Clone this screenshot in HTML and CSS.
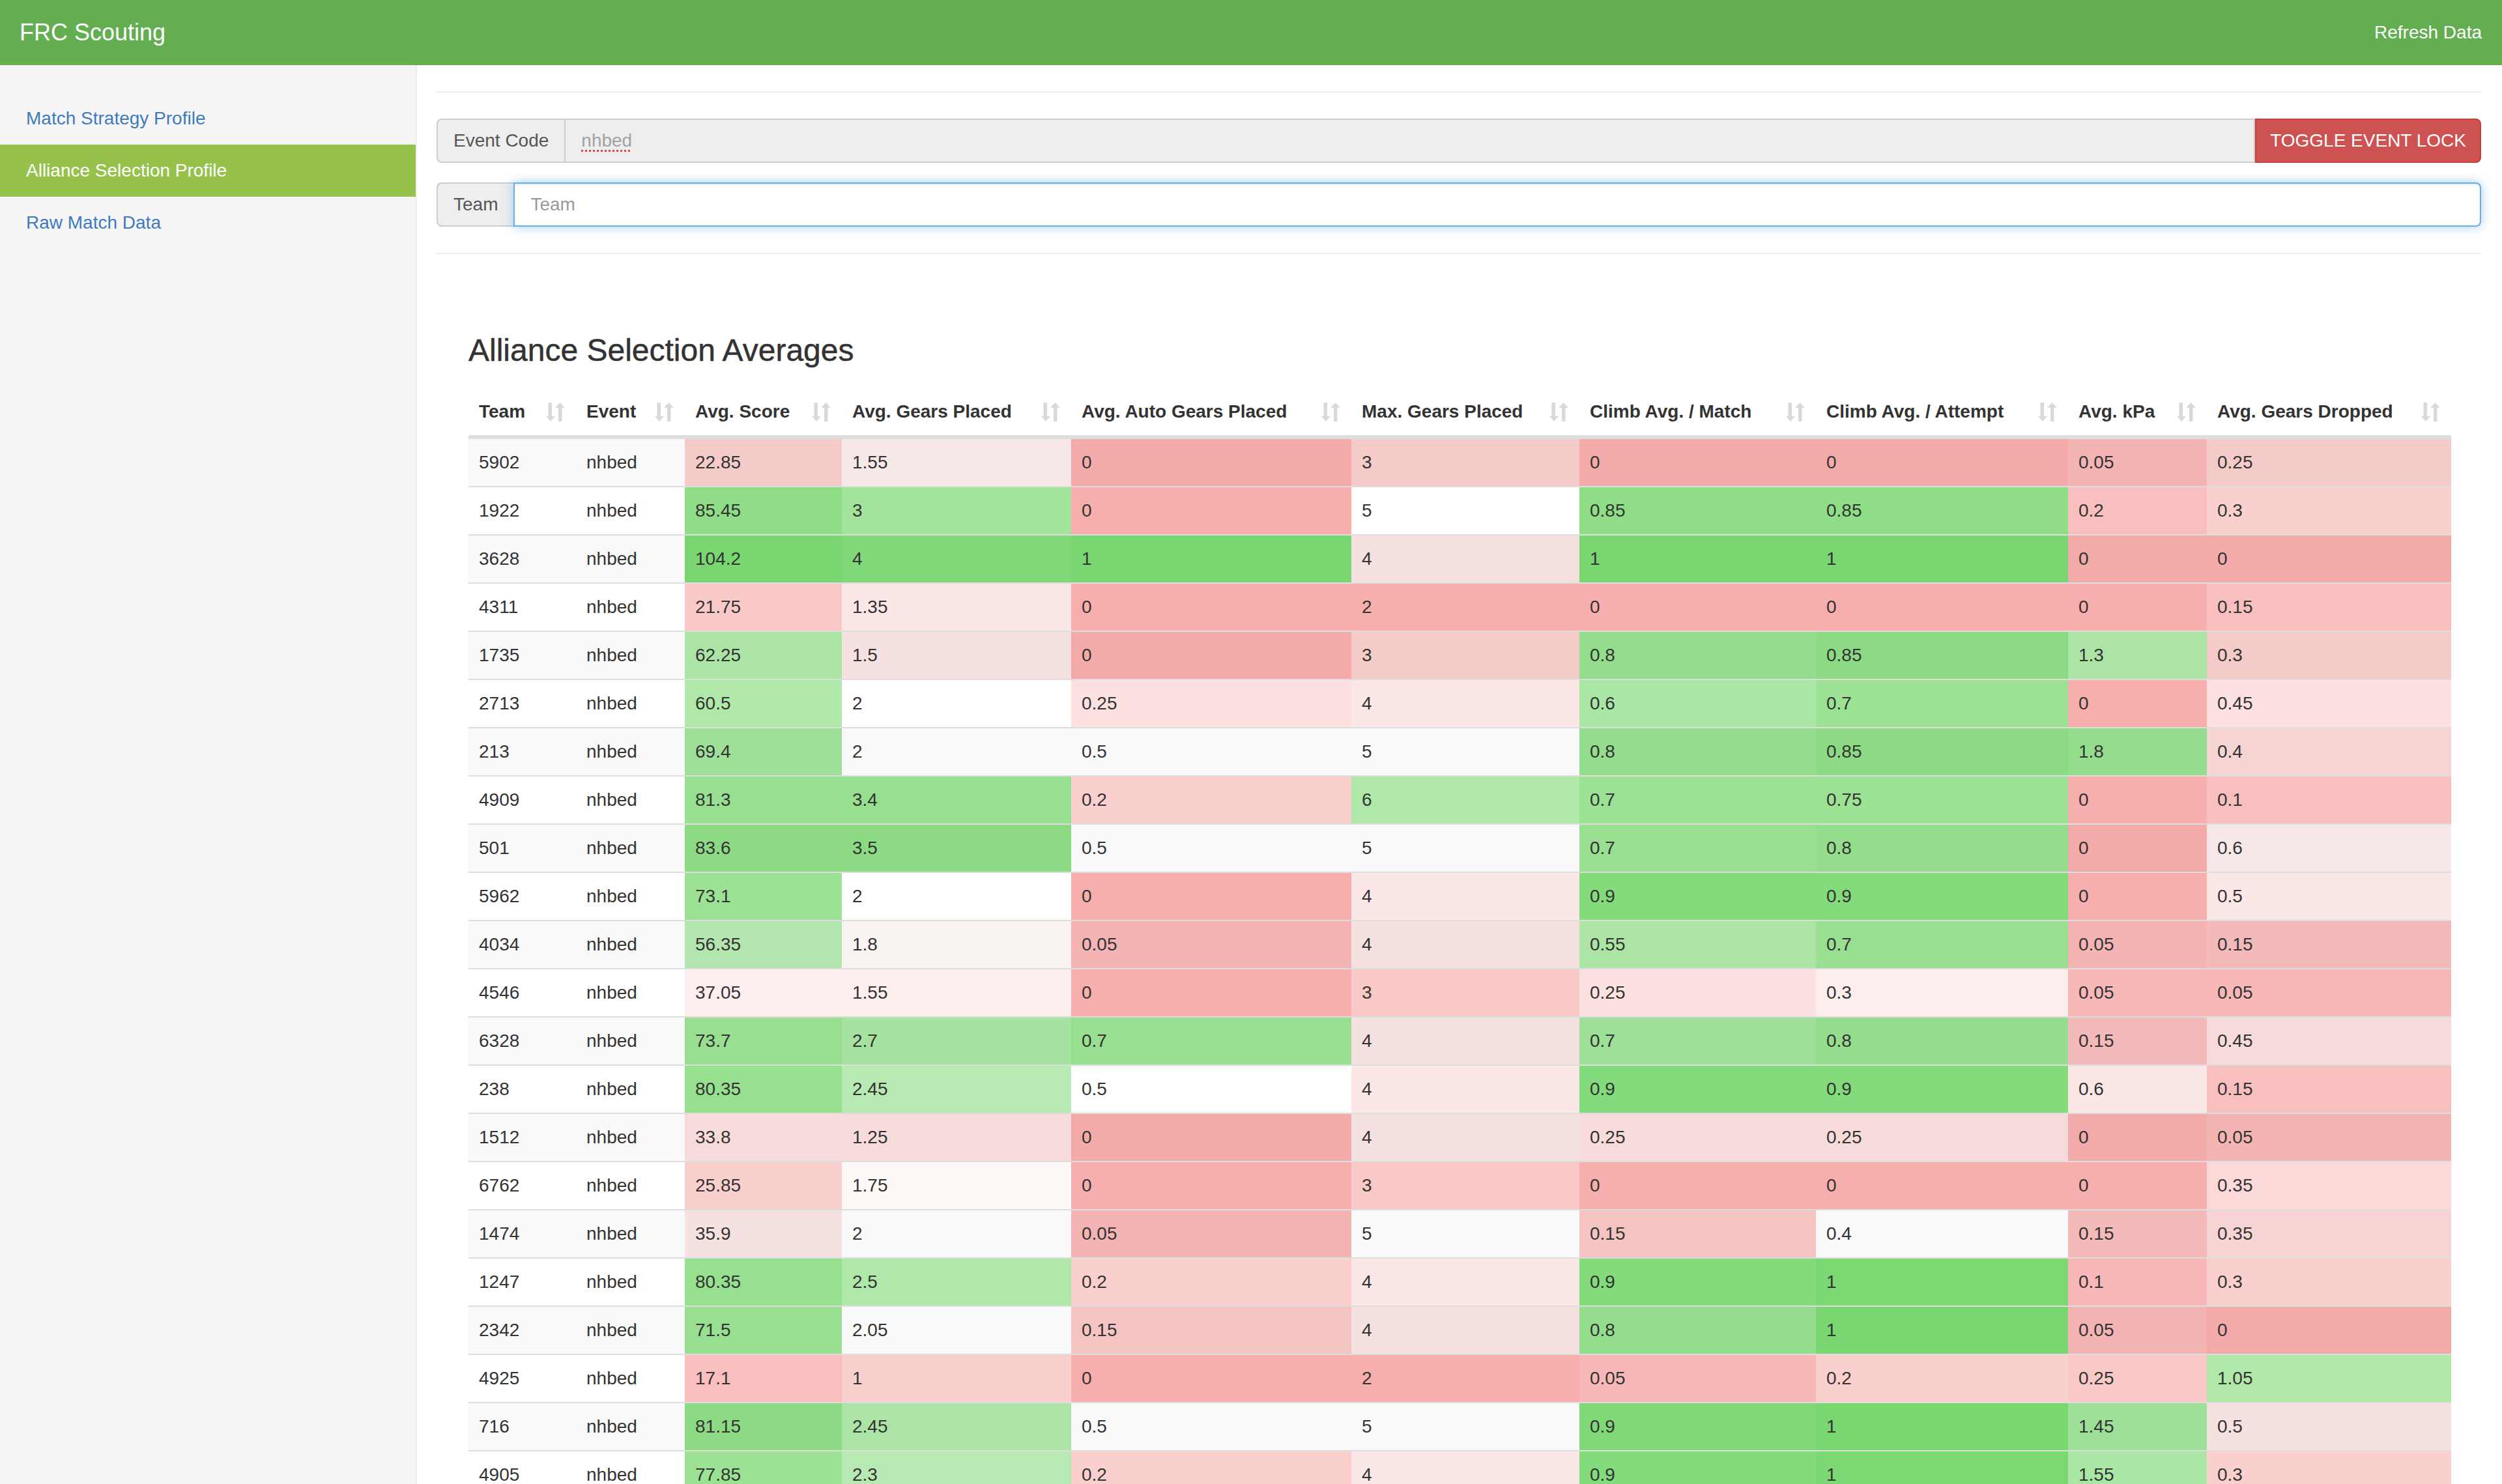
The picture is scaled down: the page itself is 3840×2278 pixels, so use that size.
FILE: index.html
```html
<!DOCTYPE html>
<html lang="en">
<head>
<meta charset="utf-8">
<title>FRC Scouting</title>
<link rel="stylesheet" href="styles.css">
</head>
<body>
<header class="navbar">
  <a class="brand" href="#">FRC Scouting</a>
  <a class="navlink" href="#">Refresh Data</a>
</header>
<div class="layout">
  <nav class="sidebar">
    <ul>
      <li><a href="#">Match Strategy Profile</a></li>
      <li class="active"><a href="#">Alliance Selection Profile</a></li>
      <li><a href="#">Raw Match Data</a></li>
    </ul>
  </nav>
  <main class="main">
    <hr class="rule">
    <div class="filters">
      <div class="input-group">
        <span class="addon">Event Code</span>
        <div class="field locked"><span class="spell">nhbed</span></div>
        <button class="toggle" type="button">TOGGLE EVENT LOCK</button>
      </div>
      <div class="input-group">
        <span class="addon">Team</span>
        <input class="field focused" type="text" placeholder="Team">
      </div>
    </div>
    <hr class="rule">
    <section class="averages">
      <h3 class="title">Alliance Selection Averages</h3>
      <table class="stats">
        <colgroup>
          <col class="c-team"><col class="c-event"><col class="c-score"><col class="c-gears"><col class="c-auto"><col class="c-max"><col class="c-cm"><col class="c-ca"><col class="c-kpa"><col class="c-drop">
        </colgroup>
        <thead>
          <tr>
            <th><div class="th-inner"><span>Team</span><svg class="sort-icon" viewBox="0 0 29 29"><path d="M3.5 0H9v21h5L7 29 0 21h3.5z"/><path d="M21.5 0L29 8h-4.5v21H19V8h-5z"/></svg></div></th>
            <th><div class="th-inner"><span>Event</span><svg class="sort-icon" viewBox="0 0 29 29"><path d="M3.5 0H9v21h5L7 29 0 21h3.5z"/><path d="M21.5 0L29 8h-4.5v21H19V8h-5z"/></svg></div></th>
            <th><div class="th-inner"><span>Avg. Score</span><svg class="sort-icon" viewBox="0 0 29 29"><path d="M3.5 0H9v21h5L7 29 0 21h3.5z"/><path d="M21.5 0L29 8h-4.5v21H19V8h-5z"/></svg></div></th>
            <th><div class="th-inner"><span>Avg. Gears Placed</span><svg class="sort-icon" viewBox="0 0 29 29"><path d="M3.5 0H9v21h5L7 29 0 21h3.5z"/><path d="M21.5 0L29 8h-4.5v21H19V8h-5z"/></svg></div></th>
            <th><div class="th-inner"><span>Avg. Auto Gears Placed</span><svg class="sort-icon" viewBox="0 0 29 29"><path d="M3.5 0H9v21h5L7 29 0 21h3.5z"/><path d="M21.5 0L29 8h-4.5v21H19V8h-5z"/></svg></div></th>
            <th><div class="th-inner"><span>Max. Gears Placed</span><svg class="sort-icon" viewBox="0 0 29 29"><path d="M3.5 0H9v21h5L7 29 0 21h3.5z"/><path d="M21.5 0L29 8h-4.5v21H19V8h-5z"/></svg></div></th>
            <th><div class="th-inner"><span>Climb Avg. / Match</span><svg class="sort-icon" viewBox="0 0 29 29"><path d="M3.5 0H9v21h5L7 29 0 21h3.5z"/><path d="M21.5 0L29 8h-4.5v21H19V8h-5z"/></svg></div></th>
            <th><div class="th-inner"><span>Climb Avg. / Attempt</span><svg class="sort-icon" viewBox="0 0 29 29"><path d="M3.5 0H9v21h5L7 29 0 21h3.5z"/><path d="M21.5 0L29 8h-4.5v21H19V8h-5z"/></svg></div></th>
            <th><div class="th-inner"><span>Avg. kPa</span><svg class="sort-icon" viewBox="0 0 29 29"><path d="M3.5 0H9v21h5L7 29 0 21h3.5z"/><path d="M21.5 0L29 8h-4.5v21H19V8h-5z"/></svg></div></th>
            <th><div class="th-inner"><span>Avg. Gears Dropped</span><svg class="sort-icon" viewBox="0 0 29 29"><path d="M3.5 0H9v21h5L7 29 0 21h3.5z"/><path d="M21.5 0L29 8h-4.5v21H19V8h-5z"/></svg></div></th>
          </tr>
        </thead>
        <tbody>
          <tr><td>5902</td><td>nhbed</td><td class="r6">22.85</td><td class="r2">1.55</td><td class="r10">0</td><td class="r6">3</td><td class="r10">0</td><td class="r10">0</td><td class="r9">0.05</td><td class="r6">0.25</td></tr>
          <tr><td>1922</td><td>nhbed</td><td class="g8">85.45</td><td class="g5">3</td><td class="r10">0</td><td>5</td><td class="g8">0.85</td><td class="g8">0.85</td><td class="r8">0.2</td><td class="r6">0.3</td></tr>
          <tr><td>3628</td><td>nhbed</td><td class="g10">104.2</td><td class="g9">4</td><td class="g10">1</td><td class="r3">4</td><td class="g10">1</td><td class="g10">1</td><td class="r10">0</td><td class="r10">0</td></tr>
          <tr><td>4311</td><td>nhbed</td><td class="r7">21.75</td><td class="r3">1.35</td><td class="r10">0</td><td class="r10">2</td><td class="r10">0</td><td class="r10">0</td><td class="r10">0</td><td class="r8">0.15</td></tr>
          <tr><td>1735</td><td>nhbed</td><td class="g3">62.25</td><td class="r3">1.5</td><td class="r10">0</td><td class="r6">3</td><td class="g7">0.8</td><td class="g8">0.85</td><td class="g3">1.3</td><td class="r6">0.3</td></tr>
          <tr><td>2713</td><td>nhbed</td><td class="g3">60.5</td><td>2</td><td class="r4">0.25</td><td class="r3">4</td><td class="g4">0.6</td><td class="g6">0.7</td><td class="r10">0</td><td class="r4">0.45</td></tr>
          <tr><td>213</td><td>nhbed</td><td class="g5">69.4</td><td>2</td><td>0.5</td><td>5</td><td class="g7">0.8</td><td class="g8">0.85</td><td class="g7">1.8</td><td class="r5">0.4</td></tr>
          <tr><td>4909</td><td>nhbed</td><td class="g7">81.3</td><td class="g7">3.4</td><td class="r6">0.2</td><td class="g3">6</td><td class="g6">0.7</td><td class="g6">0.75</td><td class="r10">0</td><td class="r8">0.1</td></tr>
          <tr><td>501</td><td>nhbed</td><td class="g8">83.6</td><td class="g8">3.5</td><td>0.5</td><td>5</td><td class="g6">0.7</td><td class="g7">0.8</td><td class="r10">0</td><td class="r2">0.6</td></tr>
          <tr><td>5962</td><td>nhbed</td><td class="g6">73.1</td><td>2</td><td class="r10">0</td><td class="r3">4</td><td class="g9">0.9</td><td class="g9">0.9</td><td class="r10">0</td><td class="r3">0.5</td></tr>
          <tr><td>4034</td><td>nhbed</td><td class="g2">56.35</td><td class="r1">1.8</td><td class="r9">0.05</td><td class="r3">4</td><td class="g3">0.55</td><td class="g6">0.7</td><td class="r9">0.05</td><td class="r8">0.15</td></tr>
          <tr><td>4546</td><td>nhbed</td><td class="r2">37.05</td><td class="r2">1.55</td><td class="r10">0</td><td class="r7">3</td><td class="r4">0.25</td><td class="r2">0.3</td><td class="r9">0.05</td><td class="r9">0.05</td></tr>
          <tr><td>6328</td><td>nhbed</td><td class="g6">73.7</td><td class="g4">2.7</td><td class="g6">0.7</td><td class="r3">4</td><td class="g5">0.7</td><td class="g7">0.8</td><td class="r8">0.15</td><td class="r4">0.45</td></tr>
          <tr><td>238</td><td>nhbed</td><td class="g7">80.35</td><td class="g2">2.45</td><td>0.5</td><td class="r3">4</td><td class="g9">0.9</td><td class="g9">0.9</td><td class="r3">0.6</td><td class="r8">0.15</td></tr>
          <tr><td>1512</td><td>nhbed</td><td class="r4">33.8</td><td class="r4">1.25</td><td class="r10">0</td><td class="r3">4</td><td class="r4">0.25</td><td class="r4">0.25</td><td class="r10">0</td><td class="r9">0.05</td></tr>
          <tr><td>6762</td><td>nhbed</td><td class="r6">25.85</td><td class="r1">1.75</td><td class="r10">0</td><td class="r7">3</td><td class="r10">0</td><td class="r10">0</td><td class="r10">0</td><td class="r5">0.35</td></tr>
          <tr><td>1474</td><td>nhbed</td><td class="r3">35.9</td><td>2</td><td class="r9">0.05</td><td>5</td><td class="r7">0.15</td><td>0.4</td><td class="r8">0.15</td><td class="r5">0.35</td></tr>
          <tr><td>1247</td><td>nhbed</td><td class="g7">80.35</td><td class="g3">2.5</td><td class="r6">0.2</td><td class="r3">4</td><td class="g9">0.9</td><td class="g10">1</td><td class="r9">0.1</td><td class="r6">0.3</td></tr>
          <tr><td>2342</td><td>nhbed</td><td class="g6">71.5</td><td>2.05</td><td class="r7">0.15</td><td class="r3">4</td><td class="g7">0.8</td><td class="g10">1</td><td class="r9">0.05</td><td class="r10">0</td></tr>
          <tr><td>4925</td><td>nhbed</td><td class="r8">17.1</td><td class="r6">1</td><td class="r10">0</td><td class="r10">2</td><td class="r9">0.05</td><td class="r6">0.2</td><td class="r7">0.25</td><td class="g3">1.05</td></tr>
          <tr><td>716</td><td>nhbed</td><td class="g8">81.15</td><td class="g3">2.45</td><td>0.5</td><td>5</td><td class="g9">0.9</td><td class="g10">1</td><td class="g5">1.45</td><td class="r3">0.5</td></tr>
          <tr><td>4905</td><td>nhbed</td><td class="g6">77.85</td><td class="g2">2.3</td><td class="r6">0.2</td><td class="r3">4</td><td class="g9">0.9</td><td class="g10">1</td><td class="g4">1.55</td><td class="r6">0.3</td></tr>
        </tbody>
      </table>
    </section>
  </main>
</div>
</body>
</html>
```
FILE: styles.css
```css
* { box-sizing: border-box; }
html, body { margin: 0; height: 100%; }
body {
  font-family: "Liberation Sans", Arial, Helvetica, sans-serif;
  font-size: 28px;
  line-height: 40px;
  color: #333;
  background: #fff;
  overflow: hidden;
}

/* top bar */
.navbar {
  height: 100px;
  background: #62ae51;
  display: flex;
  align-items: center;
  justify-content: space-between;
  padding: 0 31px 0 30px;
}
.brand { color: #fff; font-size: 36px; line-height: 40px; text-decoration: none; }
.navlink { color: #fff; font-size: 28px; line-height: 40px; text-decoration: none; }

/* page body */
.layout { display: flex; height: calc(100vh - 100px); }
.sidebar {
  width: 640px;
  flex: none;
  background: #f5f5f5;
  border-right: 2px solid #eee;
  padding-top: 42px;
}
.sidebar ul { list-style: none; margin: 0; padding: 0; }
.sidebar a { display: block; padding: 20px 40px; color: #3f7bbc; text-decoration: none; }
.sidebar .active a { background: #96c24b; color: #fff; }

.main { flex: 1; min-width: 0; padding: 40px 32px 0 30px; overflow: hidden; }
.rule { height: 0; margin: 0; border: 0; border-top: 2px solid #eee; }

/* filter inputs */
.filters { margin: 40px 0; }
.input-group { display: flex; height: 68px; }
.input-group + .input-group { margin-top: 30px; }
.addon {
  display: flex;
  align-items: center;
  padding: 0 24px;
  background: #eee;
  border: 2px solid #ccc;
  border-right: 0;
  border-radius: 8px 0 0 8px;
  color: #555;
}
.field {
  flex: 1;
  min-width: 0;
  height: 68px;
  display: flex;
  align-items: center;
  padding: 0 24px;
  border: 2px solid #ccc;
  font: inherit;
  color: #555;
  margin: 0;
}
.field.locked { background: #eee; color: #a2a2a2; }
.spell {
  text-decoration: underline dotted #e2433f;
  text-decoration-thickness: 3px;
  text-underline-offset: 5px;
}
.toggle {
  display: flex;
  align-items: center;
  padding: 0 21px;
  background: #cd5252;
  border: 2px solid #c5403d;
  border-radius: 0 8px 8px 0;
  color: #fff;
  font: inherit;
  margin: 0;
}
.field.focused {
  background: #fff;
  border-color: #66afe9;
  border-radius: 0 8px 8px 0;
  outline: none;
  box-shadow: inset 0 2px 2px rgba(0, 0, 0, .075), 0 0 16px rgba(102, 175, 233, .6);
}
.field::placeholder { color: #999; }

/* averages table */
.averages { padding: 121px 46px 0 49px; }
.title {
  margin: 0 0 32px;
  font-size: 48px;
  line-height: 53px;
  font-weight: 400;
  color: #333;
  -webkit-text-stroke: 0.5px #333;
}
.stats {
  width: 3043px;
  table-layout: fixed;
  border-collapse: separate;
  border-spacing: 0;
}
.c-team { width: 165px; }
.c-event { width: 167px; }
.c-score { width: 241px; }
.c-gears { width: 352px; }
.c-auto { width: 430px; }
.c-max { width: 350px; }
.c-cm { width: 363px; }
.c-ca { width: 387px; }
.c-kpa { width: 213px; }
.c-drop { width: 375px; }

.stats th {
  text-align: left;
  font-weight: 700;
  padding: 16px 17px 16px 16px;
  vertical-align: bottom;
  border-bottom: 4px solid #ddd;
  white-space: nowrap;
}
.th-inner { display: flex; align-items: center; justify-content: space-between; }
.sort-icon { width: 29px; height: 29px; flex: none; fill: #d9d9d9; }
.stats td {
  padding: 16px;
  border-top: 2px solid #ddd;
  white-space: nowrap;
}
.stats tbody tr:nth-child(odd) { background: #f9f9f9; }

/* heat scale: red = low, green = high */
.r1 { background-color: rgb(230 20 15 / .03); }
.r2 { background-color: rgb(230 20 15 / .07); }
.r3 { background-color: rgb(230 20 15 / .10); }
.r4 { background-color: rgb(230 20 15 / .13); }
.r5 { background-color: rgb(230 20 15 / .16); }
.r6 { background-color: rgb(230 20 15 / .20); }
.r7 { background-color: rgb(230 20 15 / .23); }
.r8 { background-color: rgb(230 20 15 / .27); }
.r9 { background-color: rgb(230 20 15 / .30); }
.r10 { background-color: rgb(230 20 15 / .34); }
.g1 { background-color: rgb(35 190 20 / .30); }
.g2 { background-color: rgb(35 190 20 / .33); }
.g3 { background-color: rgb(35 190 20 / .36); }
.g4 { background-color: rgb(35 190 20 / .39); }
.g5 { background-color: rgb(35 190 20 / .42); }
.g6 { background-color: rgb(35 190 20 / .45); }
.g7 { background-color: rgb(35 190 20 / .48); }
.g8 { background-color: rgb(35 190 20 / .51); }
.g9 { background-color: rgb(35 190 20 / .56); }
.g10 { background-color: rgb(35 190 20 / .60); }
```
